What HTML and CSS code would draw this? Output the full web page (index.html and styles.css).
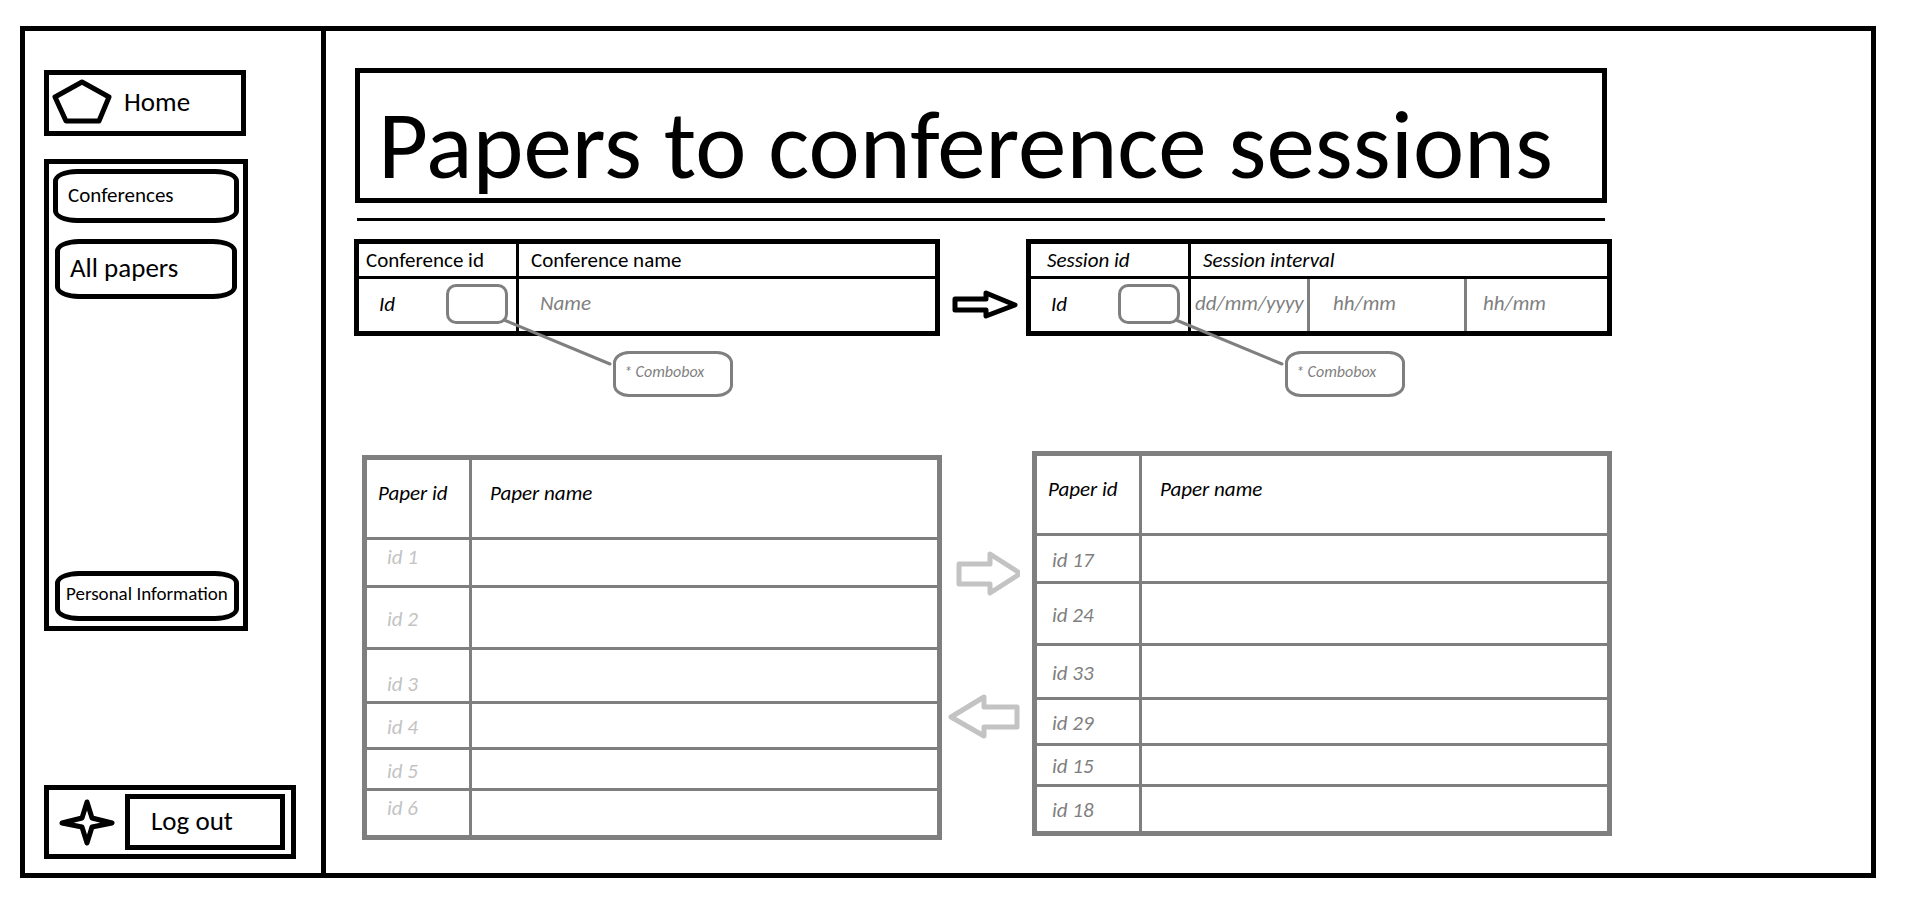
FILE: index.html
```html
<!DOCTYPE html>
<html lang="en">
<head>
<meta charset="utf-8">
<meta name="viewport" content="width=device-width, initial-scale=1">
<title>Papers to conference sessions</title>
<link rel="stylesheet" href="styles.css">
</head>
<body>
<div class="frame">
  <aside class="sidebar">
    <a class="home" href="#">
      <svg class="home-icon" viewBox="0 0 60 45" aria-hidden="true"><path d="M30 3 57 18 47 42H14L3 18Z"/></svg>
      <span>Home</span>
    </a>
    <nav class="menu">
      <button class="menu-item" type="button">Conferences</button>
      <button class="menu-item menu-item-large" type="button">All papers</button>
      <button class="menu-item menu-item-small" type="button">Personal Information</button>
    </nav>
    <div class="logout">
      <svg class="logout-icon" viewBox="0 0 56 47" aria-hidden="true"><path d="M28 3 33 19 53 24 33 28 28 44 23 28 3 24 23 19Z"/></svg>
      <button class="logout-button" type="button">Log out</button>
    </div>
  </aside>

  <main class="main">
    <h1 class="title">Papers to conference sessions</h1>
    <hr class="rule">

    <section class="pickers">
      <div class="picker">
        <table class="picker-table">
          <colgroup><col class="col-id"><col></colgroup>
          <thead>
            <tr><th>Conference id</th><th>Conference name</th></tr>
          </thead>
          <tbody>
            <tr>
              <td>
                <div class="id-field">
                  <label for="conference-id">Id</label>
                  <select class="combo" id="conference-id"><option></option></select>
                </div>
              </td>
              <td><input class="field field-name" type="text" placeholder="Name" aria-label="Conference name"></td>
            </tr>
          </tbody>
        </table>
        <svg class="pointer" viewBox="0 0 110 48" aria-hidden="true"><path d="M2 2 108 46"/></svg>
        <div class="note">* Combobox</div>
      </div>

      <svg class="step-arrow" viewBox="0 0 66 30" aria-hidden="true"><path d="M3 9H34V3L63 15 34 26V20H3Z"/></svg>

      <div class="picker">
        <table class="picker-table picker-session">
          <colgroup><col class="col-id"><col class="col-date"><col class="col-start"><col></colgroup>
          <thead>
            <tr><th>Session id</th><th colspan="3">Session interval</th></tr>
          </thead>
          <tbody>
            <tr>
              <td>
                <div class="id-field">
                  <label for="session-id">Id</label>
                  <select class="combo" id="session-id"><option></option></select>
                </div>
              </td>
              <td><input class="field field-date" type="text" placeholder="dd/mm/yyyy" aria-label="Session date"></td>
              <td class="split"><input class="field field-start" type="text" placeholder="hh/mm" aria-label="Start time"></td>
              <td class="split"><input class="field field-end" type="text" placeholder="hh/mm" aria-label="End time"></td>
            </tr>
          </tbody>
        </table>
        <svg class="pointer" viewBox="0 0 110 48" aria-hidden="true"><path d="M2 2 108 46"/></svg>
        <div class="note">* Combobox</div>
      </div>
    </section>

    <section class="papers">
      <table class="paper-table paper-available">
        <colgroup><col class="col-paper"><col></colgroup>
        <thead>
          <tr><th>Paper id</th><th>Paper name</th></tr>
        </thead>
        <tbody>
          <tr class="row-a"><td class="high">id 1</td><td></td></tr>
          <tr class="row-b"><td>id 2</td><td></td></tr>
          <tr class="row-c"><td class="low">id 3</td><td></td></tr>
          <tr class="row-d"><td>id 4</td><td></td></tr>
          <tr class="row-e"><td class="low">id 5</td><td></td></tr>
          <tr class="row-f"><td class="high">id 6</td><td></td></tr>
        </tbody>
      </table>

      <div class="movers">
        <button class="mover" type="button" aria-label="Add to session">
          <svg class="mover-icon" viewBox="0 0 72 46" aria-hidden="true"><path d="M11 13H42V3L70 21V24L42 42V33H11Z"/></svg>
        </button>
        <button class="mover" type="button" aria-label="Remove from session">
          <svg class="mover-icon" viewBox="0 0 72 46" aria-hidden="true"><path d="M69 13H36V3L3 23 36 42V33H69Z"/></svg>
        </button>
      </div>

      <table class="paper-table paper-assigned">
        <colgroup><col class="col-paper"><col></colgroup>
        <thead>
          <tr><th>Paper id</th><th>Paper name</th></tr>
        </thead>
        <tbody>
          <tr class="row-a"><td>id 17</td><td></td></tr>
          <tr class="row-b"><td>id 24</td><td></td></tr>
          <tr class="row-c"><td>id 33</td><td></td></tr>
          <tr class="row-d"><td>id 29</td><td></td></tr>
          <tr class="row-e"><td>id 15</td><td></td></tr>
          <tr class="row-f"><td>id 18</td><td></td></tr>
        </tbody>
      </table>
    </section>
  </main>
</div>
</body>
</html>
```
FILE: styles.css
```css
:root {
  --ink: #000;
  --grey: #7f7f7f;
  --pale: #c3c3c3;
  --font: Carlito, Lato, sans-serif;
}

* {
  box-sizing: border-box;
}

body {
  margin: 0;
  padding: 26px 38px 24px 20px;
  background: #fff;
  color: var(--ink);
  font-family: var(--font);
  font-size: 21px;
  line-height: 24px;
}

button,
input,
select {
  font: inherit;
  color: inherit;
  background: none;
  margin: 0;
  padding: 0;
  border: 0;
  border-radius: 0;
}

svg {
  display: block;
  flex: none;
  fill: none;
  stroke: currentColor;
  stroke-width: 5px;
  stroke-linejoin: round;
  stroke-linecap: round;
}

.frame {
  display: flex;
  min-height: calc(100vh - 50px);
  border: 5px solid var(--ink);
}

/* Sidebar */

.sidebar {
  display: flex;
  flex: none;
  flex-direction: column;
  align-items: flex-start;
  width: 301px;
  padding: 39px 19px 14px;
  border-right: 5px solid var(--ink);
}

.home {
  display: flex;
  align-items: center;
  gap: 12px;
  width: 202px;
  height: 66px;
  padding: 0 0 3px 3px;
  border: 5px solid var(--ink);
  color: inherit;
  font-size: 27px;
  text-decoration: none;
}

.home-icon {
  width: 60px;
  height: 45px;
}

.menu {
  display: flex;
  flex-direction: column;
  gap: 16px;
  width: 204px;
  height: 472px;
  margin-top: 23px;
  padding: 5px 4px;
  border: 5px solid var(--ink);
}

.menu-item {
  height: 54px;
  padding: 0 10px 2px;
  border: 5px solid var(--ink);
  border-radius: 24px / 12px;
  text-align: left;
  white-space: nowrap;
}

.menu-item-large {
  height: 60px;
  margin: 0 2px;
  font-size: 27px;
}

.menu-item-small {
  height: 50px;
  margin: auto 0 0 2px;
  padding: 0 6px 4px;
  font-size: 19px;
}

.logout {
  display: flex;
  align-items: center;
  gap: 10px;
  width: 252px;
  height: 74px;
  margin-top: auto;
  padding: 0 6px 0 10px;
  border: 5px solid var(--ink);
}

.logout-icon {
  width: 56px;
  height: 47px;
}

.logout-button {
  flex: 1;
  height: 56px;
  padding: 0 0 2px 21px;
  border: 5px solid var(--ink);
  font-size: 27px;
  text-align: left;
}

/* Main column */

.main {
  flex: 1;
  min-width: 0;
  max-width: 1286px;
  padding: 37px 0 32px 28px;
}

.title {
  height: 135px;
  margin: 0 5px 0 1px;
  padding: 12px 0 0 18px;
  border: 5px solid var(--ink);
  font-size: 97px;
  font-weight: 400;
  line-height: 120px;
  white-space: nowrap;
}

.rule {
  height: 3px;
  margin: 15px 7px 18px 3px;
  border: 0;
  background: var(--ink);
}

table {
  width: 100%;
  border-spacing: 0;
  table-layout: fixed;
}

th {
  font-weight: 400;
  text-align: left;
}

th,
td {
  padding: 0;
}

/* Conference and session pickers */

.pickers {
  display: grid;
  grid-template-columns: 1fr 86px 1fr;
}

.picker {
  position: relative;
}

.picker-table {
  border: 5px solid var(--ink);
}

.picker-table th {
  height: 35px;
  padding-left: 7px;
  border-bottom: 3px solid var(--ink);
}

.picker-table th + th {
  padding-left: 12px;
}

.picker-table td {
  height: 52px;
  padding-bottom: 3px;
}

.picker-table th + th,
.picker-table td + td {
  border-left: 3px solid var(--ink);
}

.picker-table td.split {
  border-left-color: var(--grey);
}

.picker-session th {
  padding-left: 16px;
  font-style: italic;
}

.col-id {
  width: 157px;
}

.col-date {
  width: 119px;
}

.col-start {
  width: 157px;
}

.id-field {
  display: flex;
  align-items: center;
  justify-content: space-between;
  padding: 0 8px 0 20px;
  font-style: italic;
}

.combo {
  width: 62px;
  height: 40px;
  border: 3px solid var(--grey);
  border-radius: 10px;
  appearance: none;
}

.field {
  display: block;
  width: 100%;
  height: 40px;
  padding-bottom: 2px;
  font-style: italic;
}

.field::placeholder {
  color: var(--grey);
  opacity: 1;
}

.field-name {
  padding-left: 21px;
}

.field-date {
  padding-left: 4px;
}

.field-start {
  padding-left: 23px;
}

.field-end {
  padding-left: 16px;
}

.pointer {
  position: absolute;
  top: 79px;
  left: 148px;
  width: 110px;
  height: 48px;
  color: var(--grey);
  stroke-width: 3px;
}

.note {
  position: absolute;
  top: 112px;
  left: 259px;
  width: 120px;
  height: 46px;
  padding: 6px 8px;
  border: 3px solid var(--grey);
  border-radius: 16px / 12px;
  color: var(--grey);
  font-size: 16px;
  font-style: italic;
}

.step-arrow {
  width: 66px;
  height: 30px;
  margin: 51px 0 0 12px;
}

/* Paper lists */

.papers {
  display: grid;
  grid-template-columns: 1fr 90px 1fr;
  align-items: start;
  margin-top: 115px;
  padding-left: 8px;
}

.paper-table {
  border: 5px solid var(--grey);
  font-style: italic;
}

.paper-table th {
  height: 77px;
  padding: 0 0 12px 11px;
}

.paper-table th + th {
  padding-left: 18px;
}

.paper-table td {
  border-top: 3px solid var(--grey);
}

.paper-table th + th,
.paper-table td + td {
  border-left: 3px solid var(--grey);
}

.col-paper {
  width: 102px;
}

.paper-available {
  margin-top: 4px;
}

.paper-available td {
  padding: 2px 0 0 20px;
  color: var(--pale);
}

.paper-assigned td {
  padding: 2px 0 0 15px;
  color: var(--grey);
}

.paper-available td.high {
  padding-top: 5px;
  vertical-align: top;
}

.paper-available td.low {
  padding-bottom: 5px;
  vertical-align: bottom;
}

.row-a td {
  height: 48px;
}

.row-b td {
  height: 62px;
}

.row-c td {
  height: 54px;
}

.row-d td {
  height: 46px;
}

.row-e td {
  height: 41px;
}

.row-f td {
  height: 47px;
}

.movers {
  display: flex;
  flex-direction: column;
  align-items: flex-start;
  gap: 97px;
  padding: 100px 0 0 6px;
}

.mover-icon {
  width: 72px;
  height: 46px;
  color: var(--pale);
}
```
